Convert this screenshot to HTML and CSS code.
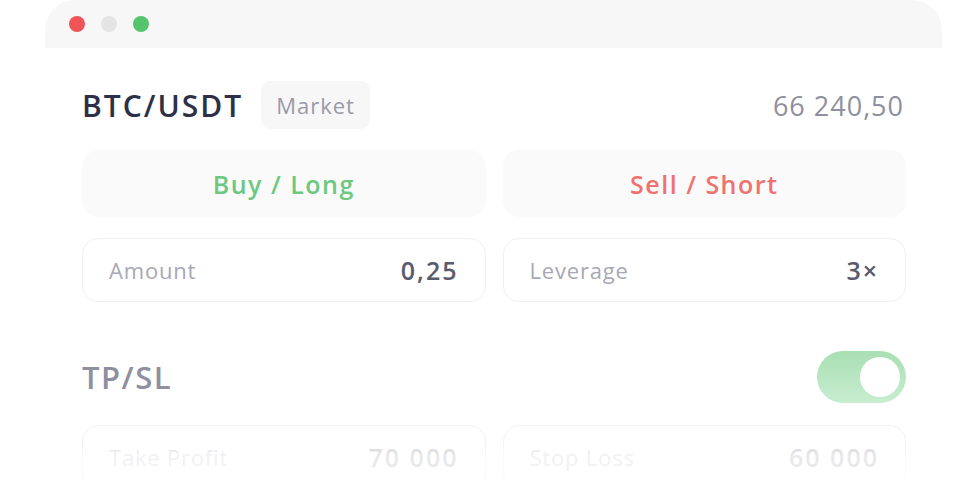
FILE: index.html
```html
<!DOCTYPE html>
<html lang="en">

<head>
    <meta charset="UTF-8">
    <title>Order</title>
    <link rel="stylesheet" href="styles.css">
</head>

<body>

    <div class="window">
        <div class="titlebar">
            <span class="dot red"></span>
            <span class="dot grey"></span>
            <span class="dot green"></span>
        </div>

        <div class="content">
            <div class="head">
                <div class="pair">
                    <span class="symbol">BTC/USDT</span>
                    <span class="pill">Market</span>
                </div>
                <span class="price">66 240,50</span>
            </div>

            <div class="row sides">
                <button class="side buy">Buy / Long</button>
                <button class="side sell">Sell / Short</button>
            </div>

            <div class="row fields">
                <div class="field"><span class="label">Amount</span><span class="value">0,25</span></div>
                <div class="field"><span class="label">Leverage</span><span class="value">3×</span></div>
            </div>

            <div class="tpsl">
                <span class="title">TP/SL</span>
                <div class="toggle"><span class="knob"></span></div>
            </div>

            <div class="row fields faded">
                <div class="field"><span class="label">Take Profit</span><span class="value">70 000</span></div>
                <div class="field"><span class="label">Stop Loss</span><span class="value">60 000</span></div>
            </div>
        </div>
    </div>

</body>

</html>
```

FILE: styles.css
```css
body {
    margin: 0;
    background: #fff;
    font-family: "Open Sans", "DejaVu Sans", sans-serif;
    overflow: hidden;
}

.window {
    margin-left: 45px;
    width: 897px;
    height: 493px;
    background: #fff;
}

.titlebar {
    height: 48px;
    background: #f7f7f7;
    border-radius: 30px 30px 0 0;
    display: flex;
    align-items: center;
    gap: 16px;
    padding-left: 24px;
}

.dot {
    width: 16px;
    height: 16px;
    border-radius: 50%;
}

.red { background: #f05454; }
.grey { background: #e4e4e4; }
.green { background: #55c46c; }

.content {
    padding: 33px 36px 0 37px;
}

.head {
    display: flex;
    justify-content: space-between;
    align-items: center;
    height: 48px;
}

.pair {
    display: flex;
    align-items: center;
    gap: 18px;
}

.symbol {
    font-size: 30px;
    font-weight: 600;
    letter-spacing: 2px;
    color: #2d3047;
}

.pill {
    height: 48px;
    padding: 0 15px;
    display: flex;
    align-items: center;
    background: #f7f7f8;
    border-radius: 9px;
    font-size: 22px;
    letter-spacing: 1px;
    color: #9a9aa8;
}

.price {
    font-size: 27px;
    letter-spacing: 1px;
    color: #8e8fa0;
    margin-right: 2px;
}

.row {
    display: grid;
    grid-template-columns: 1fr 1fr;
    gap: 17px;
}

.sides {
    margin-top: 21px;
}

.side {
    height: 67px;
    border: none;
    border-radius: 16px;
    background: #fafafa;
    font-family: inherit;
    font-size: 25px;
    font-weight: 600;
    letter-spacing: 1.5px;
}

.buy { color: #6cc97f; }
.sell { color: #ef7270; }

.fields {
    margin-top: 21px;
}

.field {
    height: 62px;
    border: 1px solid #f0f0f2;
    border-radius: 16px;
    display: flex;
    justify-content: space-between;
    align-items: center;
    padding: 0 26px 0 26px;
}

.label {
    font-size: 22px;
    letter-spacing: 0.8px;
    color: #a8a8b5;
}

.value {
    font-size: 25px;
    font-weight: 600;
    letter-spacing: 2px;
    color: #5a5b6e;
}

.tpsl {
    margin-top: 49px;
    height: 52px;
    display: flex;
    justify-content: space-between;
    align-items: center;
}

.title {
    font-size: 31px;
    font-weight: 600;
    letter-spacing: 1.5px;
    color: #8e8fa0;
}

.toggle {
    width: 89px;
    height: 52px;
    border-radius: 26px;
    background: linear-gradient(#a8dfb3, #c8edd0);
    display: flex;
    align-items: center;
    justify-content: flex-end;
    padding-right: 6px;
    box-sizing: border-box;
}

.knob {
    width: 40px;
    height: 40px;
    border-radius: 50%;
    background: #fff;
}

.faded {
    margin-top: 22px;
    position: relative;
}

.faded::after {
    content: "";
    position: absolute;
    inset: 0 -4px -4px;
    background: linear-gradient(rgba(255, 255, 255, 0) 20%, rgba(255, 255, 255, 0.6) 45%, rgba(255, 255, 255, 0.6) 70%, #fff 92%);
}

.faded .field {
    border-color: #f2f2f4;
}

.faded .label { color: #dcdce2; }
.faded .value { color: #c9c9d1; }
```
